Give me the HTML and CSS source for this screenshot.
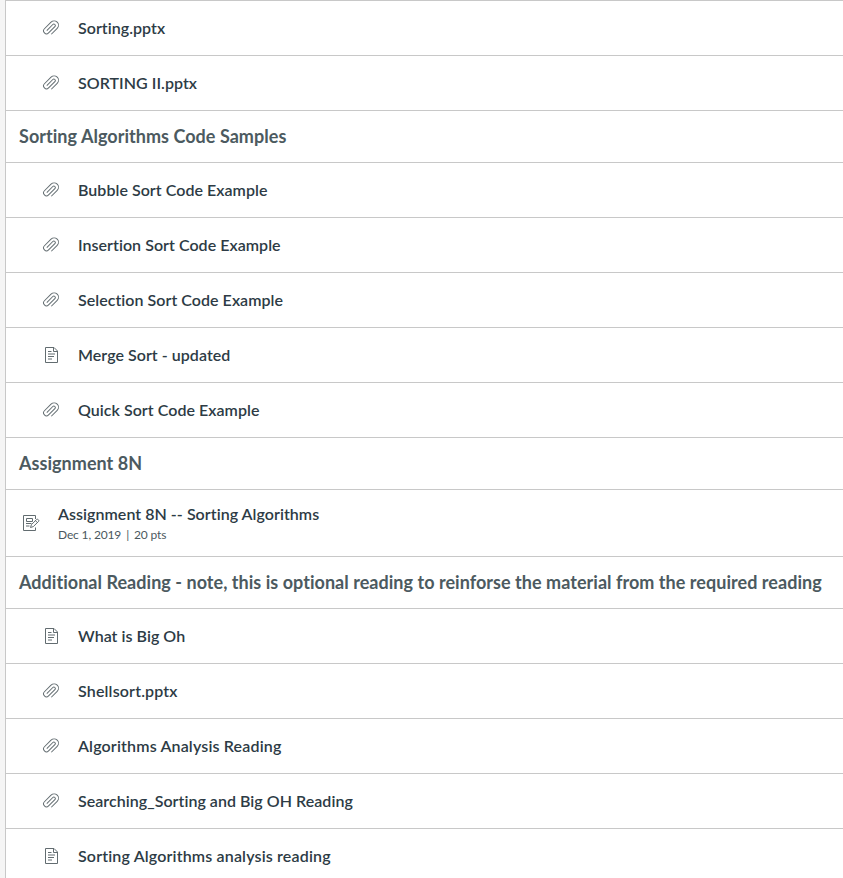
FILE: index.html
```
<!DOCTYPE html>
<html lang="en">
<head>
<meta charset="utf-8">
<title>Modules</title>
<link rel="stylesheet" href="styles.css">
</head>
<body>
<svg class="sprite" aria-hidden="true">
  <symbol id="clip" viewBox="0 0 18 18">
    <path transform="translate(9.1 9.3) rotate(-45) scale(.97)" d="M-4.8 -1.5H4A1.5 1.5 0 0 1 4 1.5H-5.2A3 3 0 0 1 -5.2 -4.5H4.4A4.5 4.5 0 0 1 4.4 4.5H-4.2"/>
  </symbol>
  <symbol id="page" viewBox="0 0 18 18">
    <path d="M2.5 1.5H11L14.5 5V16.5H2.5ZM10.5 1.5V5.5H14.5M5 5.5H8.5M5 8H12M5 10.5H11M5 13H9"/>
  </symbol>
  <symbol id="task" viewBox="0 0 18 18">
    <path d="M13.5 5V1.5H1.5V16.5H13.5V13.5M4.5 4.5H10.5V7.5H4.5ZM4 9.5H9.5M4 12H7.5M8.5 13.5 9.4 10.7 14.7 5.4Q15.6 4.9 16.4 5.8 17.2 6.6 16.6 7.4L11.3 12.6ZM13.5 6.7 15.4 8.6"/>
  </symbol>
</svg>
<main class="module">
  <div class="row"><svg class="icon"><use href="#clip"/></svg><a class="title">Sorting.pptx</a></div>
  <div class="row"><svg class="icon"><use href="#clip"/></svg><a class="title">SORTING II.pptx</a></div>
  <h2 class="heading">Sorting Algorithms Code Samples</h2>
  <div class="row"><svg class="icon"><use href="#clip"/></svg><a class="title">Bubble Sort Code Example</a></div>
  <div class="row"><svg class="icon"><use href="#clip"/></svg><a class="title">Insertion Sort Code Example</a></div>
  <div class="row"><svg class="icon"><use href="#clip"/></svg><a class="title">Selection Sort Code Example</a></div>
  <div class="row"><svg class="icon page"><use href="#page"/></svg><a class="title">Merge Sort - updated</a></div>
  <div class="row"><svg class="icon"><use href="#clip"/></svg><a class="title">Quick Sort Code Example</a></div>
  <h2 class="heading">Assignment 8N</h2>
  <div class="row assignment">
    <svg class="icon"><use href="#task"/></svg>
    <div class="info">
      <a class="title">Assignment 8N -- Sorting Algorithms</a>
      <div class="details"><span>Dec 1, 2019</span><span class="sep">|</span><span>20 pts</span></div>
    </div>
  </div>
  <h2 class="heading">Additional Reading - note, this is optional reading to reinforse the material from the required reading</h2>
  <div class="row"><svg class="icon page"><use href="#page"/></svg><a class="title">What is Big Oh</a></div>
  <div class="row"><svg class="icon"><use href="#clip"/></svg><a class="title wide">Shellsort.pptx</a></div>
  <div class="row"><svg class="icon"><use href="#clip"/></svg><a class="title wide">Algorithms Analysis Reading</a></div>
  <div class="row"><svg class="icon"><use href="#clip"/></svg><a class="title">Searching_Sorting and Big OH Reading</a></div>
  <div class="row"><svg class="icon page"><use href="#page"/></svg><a class="title wide">Sorting Algorithms analysis reading</a></div>
</main>
</body>
</html>
```
FILE: styles.css
```
* { box-sizing: border-box; }
html { overflow: hidden; }
body {
  margin: 0;
  height: 878px;
  overflow: hidden;
  background: #f5f5f5;
  color: #2d3b45;
  font-family: Lato, sans-serif;
  font-variant-ligatures: none;
}
.sprite { display: none; }
.module {
  margin-left: 5px;
  border-left: 1px solid #c8c8c8;
  background: #fff;
}
.row, .heading { border-top: 1px solid #c8c8c8; }
.row {
  display: flex;
  align-items: center;
  gap: 18px;
  height: 55px;
  padding-left: 36px;
}
.icon {
  flex: none;
  width: 18px;
  height: 18px;
  fill: none;
  stroke: #626c70;
  stroke-width: 1;
}
.icon.page {
  margin-left: 1px;
  margin-right: -1px;
}
.title {
  font-size: 16px;
  font-weight: 600;
  letter-spacing: 0.04px;
  line-height: 20px;
  white-space: nowrap;
}
.title.wide { letter-spacing: 0.16px; }
.heading {
  height: 52px;
  margin: 0;
  padding-left: 13px;
  color: #4c5a60;
  font-size: 18px;
  font-weight: 700;
  letter-spacing: 0.037px;
  line-height: 51px;
  white-space: nowrap;
}
.assignment {
  height: 67px;
  padding-left: 16px;
}
.info {
  display: flex;
  flex-direction: column;
  padding-top: 3px;
}
.details {
  display: flex;
  gap: 5px;
  color: #4c5860;
  font-size: 12px;
  letter-spacing: -0.15px;
  line-height: 21px;
}
```
